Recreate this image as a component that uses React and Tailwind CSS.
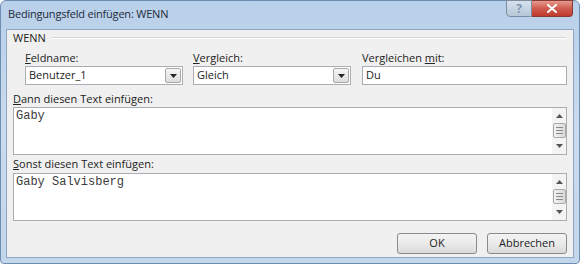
import React from 'react'

const ui = { fontFamily: '"Open Sans", "Noto Sans", sans-serif' }
const mono = { fontFamily: '"Liberation Mono", "Courier New", monospace' }

function DropArrow() {
  return (
    <div className="w-[16px] h-[15px] border border-[#a8a8a8] rounded-[2px] bg-gradient-to-b from-[#f6f6f6] to-[#dcdcdc] flex items-center justify-center">
      <svg width="7" height="4" viewBox="0 0 7 4">
        <path d="M0 0h7L3.5 4z" fill="#222" />
      </svg>
    </div>
  )
}

function Select({ value }) {
  return (
    <div className="w-[158px] h-[19px] border border-[#abadb3] bg-white flex items-center justify-between pl-[3px] pr-[1px]">
      <span className="text-[11px] text-[#222]">{value}</span>
      <DropArrow />
    </div>
  )
}

function ScrollBar() {
  return (
    <div className="w-[14px] h-full bg-[#f4f4f4] flex flex-col items-center">
      <div className="h-[15px] w-full flex items-center justify-center">
        <svg width="7" height="4" viewBox="0 0 7 4">
          <path d="M0 4h7L3.5 0z" fill="#555" />
        </svg>
      </div>
      <div className="w-[13px] h-[15px] border border-[#a9a9a9] rounded-[2px] bg-gradient-to-r from-[#f2f2f2] to-[#dadada] flex flex-col items-center justify-center gap-[2px]">
        <div className="w-[7px] h-px bg-[#8a8a8a]" />
        <div className="w-[7px] h-px bg-[#8a8a8a]" />
        <div className="w-[7px] h-px bg-[#8a8a8a]" />
      </div>
      <div className="flex-1 w-full flex items-center justify-center">
        <svg width="7" height="4" viewBox="0 0 7 4">
          <path d="M0 0h7L3.5 4z" fill="#555" />
        </svg>
      </div>
    </div>
  )
}

function TextBox({ text }) {
  return (
    <div className="h-[48px] border border-[#abadb3] bg-white flex">
      <div className="flex-1 pl-[2px] pt-[1px] text-[12px] leading-[14px] text-[#3c3c3c]" style={mono}>
        {text}
      </div>
      <ScrollBar />
    </div>
  )
}

function Button({ children }) {
  return (
    <div className="w-[80px] h-[21px] border border-[#8a8a8a] rounded-[3px] bg-gradient-to-b from-[#f3f3f3] via-[#ebebeb] to-[#d9d9d9] flex items-center justify-center text-[11px] text-[#222]">
      {children}
    </div>
  )
}

export default function App() {
  return (
    <div className="w-[580px] h-[267px] bg-white" style={ui}>
      <div className="h-[264px] rounded-t-[6px] rounded-b-[4px] border border-[#6f8db0] bg-gradient-to-b from-[#b9d0ea] via-[#c9dbef] to-[#c2d6ec] flex flex-col px-[5px] pb-[5px]">
        {/* Title bar */}
        <div className="h-[28px] flex items-start justify-between shrink-0">
          <div className="pl-[2px] pt-[5px] text-[11px] tracking-[-0.2px] text-[#1e2a3a]">Bedingungsfeld einfügen: WENN</div>
          <div className="flex mr-[1px] -mt-px">
            <div className="w-[26px] h-[17px] border border-[#7d8ea3] rounded-bl-[4px] bg-gradient-to-b from-[#d7e2ee] to-[#b6c6d8] flex items-center justify-center text-[12px] font-bold text-[#8196ae]">
              ?
            </div>
            <div className="w-[41px] h-[17px] border border-[#8a3a36] border-l-0 rounded-br-[4px] bg-gradient-to-b from-[#e49a8e] via-[#cf5b4e] to-[#c0392d] flex items-center justify-center">
              <svg width="10" height="9" viewBox="0 0 10 9">
                <path d="M1 1l8 7M9 1L1 8" stroke="#fff" strokeWidth="2" strokeLinecap="square" />
              </svg>
            </div>
          </div>
        </div>

        {/* Client area */}
        <div className="flex-1 border border-[#8ea4bf] bg-[#f0f0f0] px-[6px] flex flex-col text-[11px] text-[#222]">
          <div className="h-[16px] flex items-center">
            <span>WENN</span>
            <div className="flex-1 ml-[6px] mr-[1px] flex flex-col">
              <div className="h-px bg-[#d5d5d5]" />
              <div className="h-px bg-white" />
            </div>
          </div>

          <div className="mt-[5px] pl-[12px] flex">
            <div className="flex flex-col w-[158px]">
              <div className="h-[14px] leading-[14px]"><u>F</u>eldname:</div>
              <div className="mt-px"><Select value="Benutzer_1" /></div>
            </div>
            <div className="flex flex-col w-[158px] ml-[10px]">
              <div className="h-[14px] leading-[14px]"><u>V</u>ergleich:</div>
              <div className="mt-px"><Select value="Gleich" /></div>
            </div>
            <div className="flex flex-col flex-1 ml-[11px]">
              <div className="h-[14px] leading-[14px]">Vergleichen <u>m</u>it:</div>
              <div className="mt-px h-[19px] border border-[#abadb3] bg-white flex items-center pl-[3px]">Du</div>
            </div>
          </div>

          <div className="mt-[7px] h-[14px] leading-[14px]"><u>D</u>ann diesen Text einfügen:</div>
          <div className="mt-px"><TextBox text="Gaby" /></div>

          <div className="mt-[2px] h-[14px] leading-[14px]"><u>S</u>onst diesen Text einfügen:</div>
          <div className="mt-[2px]"><TextBox text="Gaby Salvisberg" /></div>

          <div className="mt-[12px] flex justify-end gap-[10px]">
            <Button>OK</Button>
            <Button>Abbrechen</Button>
          </div>
        </div>
      </div>
    </div>
  )
}
